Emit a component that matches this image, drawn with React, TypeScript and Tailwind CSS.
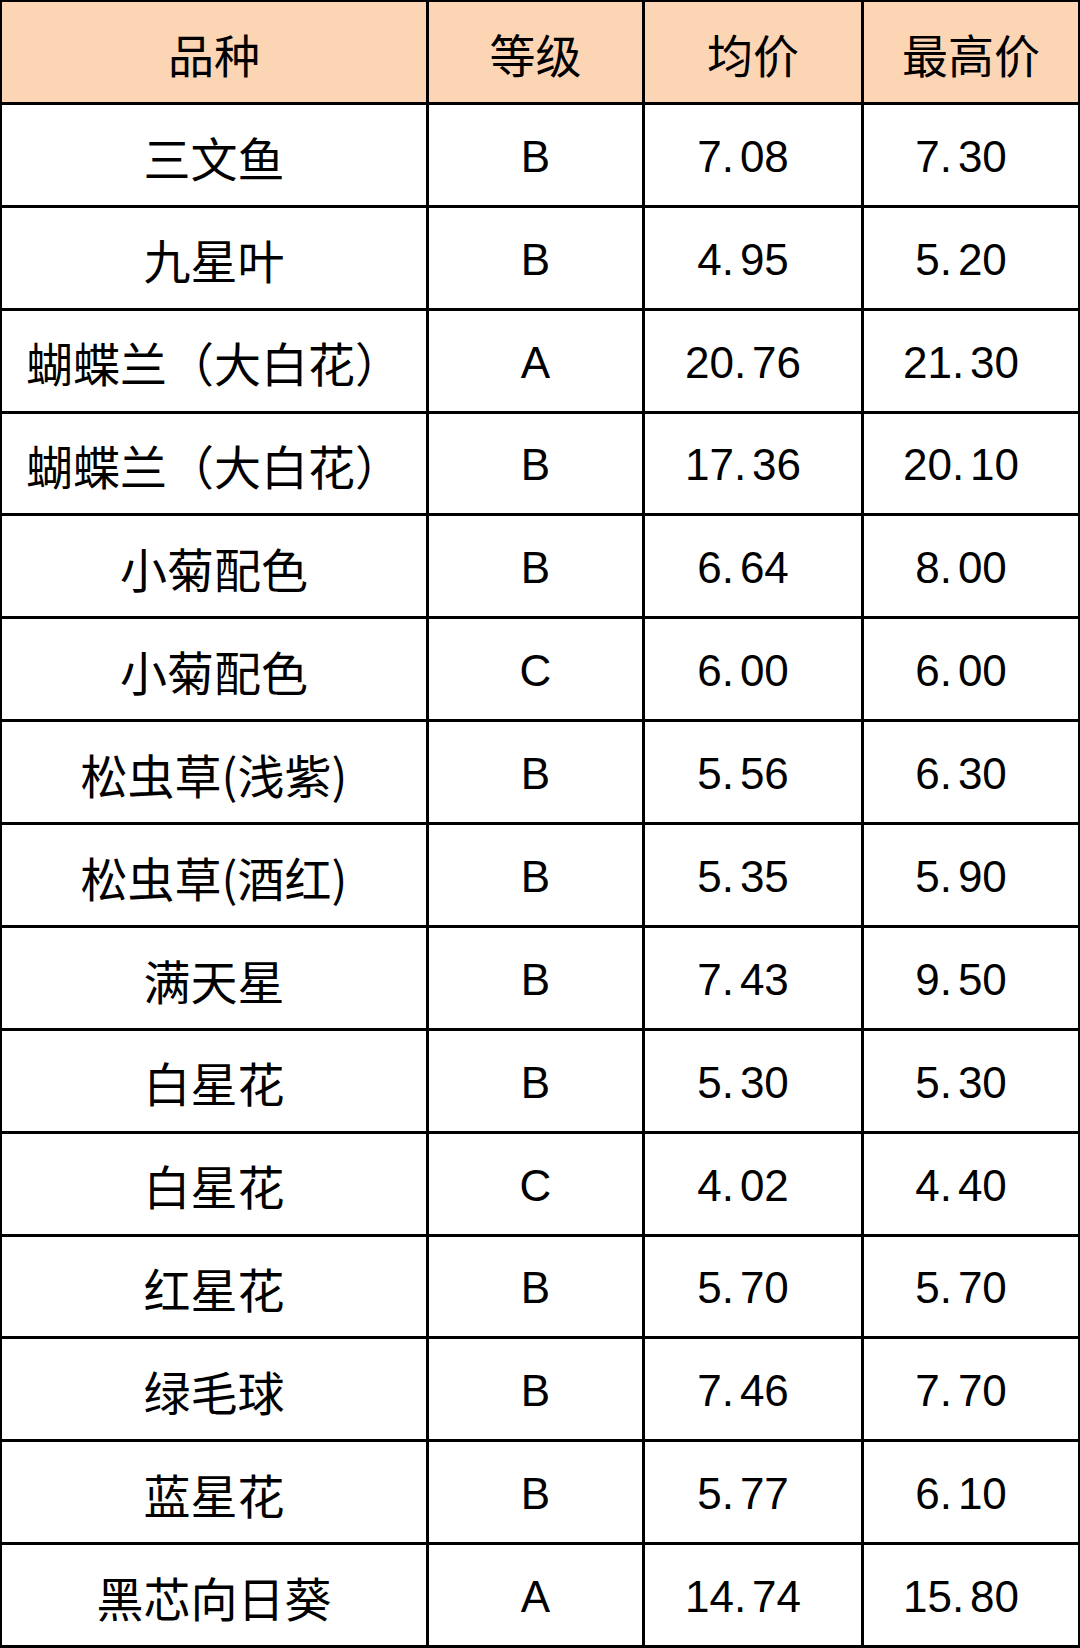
import React from "react";

type Row = [string, string, string, string];

const rows: Row[] = [
    ["三文鱼", "B", "7.08", "7.30"],
    ["九星叶", "B", "4.95", "5.20"],
    ["蝴蝶兰（大白花）", "A", "20.76", "21.30"],
    ["蝴蝶兰（大白花）", "B", "17.36", "20.10"],
    ["小菊配色", "B", "6.64", "8.00"],
    ["小菊配色", "C", "6.00", "6.00"],
    ["松虫草(浅紫)", "B", "5.56", "6.30"],
    ["松虫草(酒红)", "B", "5.35", "5.90"],
    ["满天星", "B", "7.43", "9.50"],
    ["白星花", "B", "5.30", "5.30"],
    ["白星花", "C", "4.02", "4.40"],
    ["红星花", "B", "5.70", "5.70"],
    ["绿毛球", "B", "7.46", "7.70"],
    ["蓝星花", "B", "5.77", "6.10"],
    ["黑芯向日葵", "A", "14.74", "15.80"],
];

const headers = ["品种", "等级", "均价", "最高价"];

// digits in the source sheet leave a wider gap after the decimal point
function Price({ value }: { value: string }) {
    const [whole, frac] = value.split(".");
    return (
        <span className="pr-5">
            {whole}.<span className="ml-[6px]">{frac}</span>
        </span>
    );
}

export default function App() {
    return (
        <div
            className="w-[1080px] h-[1648px] bg-black p-[2px] pb-[3px] grid grid-cols-[424px_213px_216px_214px] grid-rows-[repeat(16,1fr)] gap-[3px] text-[44px] text-black"
            style={{ fontFamily: '"Liberation Sans", "Noto Sans CJK SC", sans-serif' }}
        >
            {headers.map((h) => (
                <div
                    key={h}
                    className="bg-[#fcd5b4] flex items-center justify-center pt-1 text-[46px]"
                    style={{ fontFamily: '"Noto Sans CJK SC", sans-serif' }}
                >
                    {h}
                </div>
            ))}
            {rows.map((r, i) => (
                <React.Fragment key={i}>
                    <div
                        className="bg-white flex items-center justify-center pt-1 text-[47px]"
                        style={{ fontFamily: '"Liberation Sans Narrow", "Noto Sans CJK SC", sans-serif' }}
                    >
                        {r[0]}
                    </div>
                    <div
                        className="bg-white flex items-center justify-center pt-1"
                        style={{ fontFamily: '"Liberation Sans Narrow", "Liberation Sans", sans-serif' }}
                    >
                        {r[1]}
                    </div>
                    <div className="bg-white flex items-center justify-center pt-1">
                        <Price value={r[2]} />
                    </div>
                    <div className="bg-white flex items-center justify-center pt-1">
                        <Price value={r[3]} />
                    </div>
                </React.Fragment>
            ))}
        </div>
    );
}
